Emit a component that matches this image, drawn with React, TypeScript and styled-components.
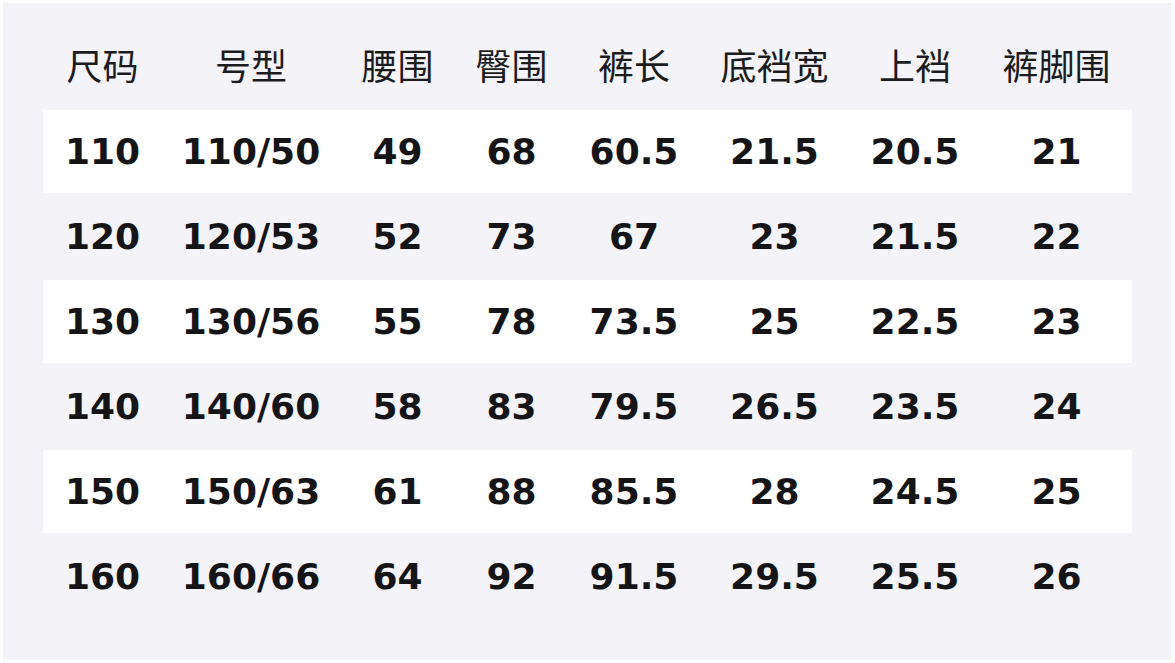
import React from "react";
import styled, { createGlobalStyle } from "styled-components";

const GlobalStyle = createGlobalStyle`
  html, body {
    margin: 0;
    padding: 0;
    background: #ffffff;
  }
  body {
    font-family: "DejaVu Sans", "Noto Sans CJK SC", sans-serif;
  }
`;

const COLUMNS = "119px 178px 115px 113px 132px 149px 132px 151px";

const Panel = styled.div`
  box-sizing: border-box;
  margin: 3px;
  width: 1169px;
  height: 657px;
  background: #f3f3f8;
  padding: 30px 40px 0 40px;
`;

const HeaderRow = styled.div`
  display: grid;
  grid-template-columns: ${COLUMNS};
  height: 62px;
  margin-bottom: 15px;
  align-items: center;
`;

const HeadCell = styled.div`
  text-align: center;
  font-family: "Noto Sans CJK SC", "DejaVu Sans", sans-serif;
  font-size: 36px;
  font-weight: 400;
  color: #1c1c1f;
  white-space: nowrap;
`;

const Row = styled.div<{ $striped: boolean }>`
  display: grid;
  grid-template-columns: ${COLUMNS};
  height: 83px;
  margin-bottom: 2px;
  align-items: center;
  background: ${(p) => (p.$striped ? "#ffffff" : "transparent")};
`;

const Cell = styled.div`
  text-align: center;
  font-family: "DejaVu Sans", sans-serif;
  font-size: 36px;
  font-weight: 700;
  color: #151518;
  white-space: nowrap;
`;

const headers = ["尺码", "号型", "腰围", "臀围", "裤长", "底裆宽", "上裆", "裤脚围"];

const rows: string[][] = [
  ["110", "110/50", "49", "68", "60.5", "21.5", "20.5", "21"],
  ["120", "120/53", "52", "73", "67", "23", "21.5", "22"],
  ["130", "130/56", "55", "78", "73.5", "25", "22.5", "23"],
  ["140", "140/60", "58", "83", "79.5", "26.5", "23.5", "24"],
  ["150", "150/63", "61", "88", "85.5", "28", "24.5", "25"],
  ["160", "160/66", "64", "92", "91.5", "29.5", "25.5", "26"],
];

export default function App() {
  return (
    <>
      <GlobalStyle />
      <Panel>
        <HeaderRow>
          {headers.map((h) => (
            <HeadCell key={h}>{h}</HeadCell>
          ))}
        </HeaderRow>
        {rows.map((r, i) => (
          <Row key={r[0]} $striped={i % 2 === 0}>
            {r.map((v, j) => (
              <Cell key={j}>{v}</Cell>
            ))}
          </Row>
        ))}
      </Panel>
    </>
  );
}
